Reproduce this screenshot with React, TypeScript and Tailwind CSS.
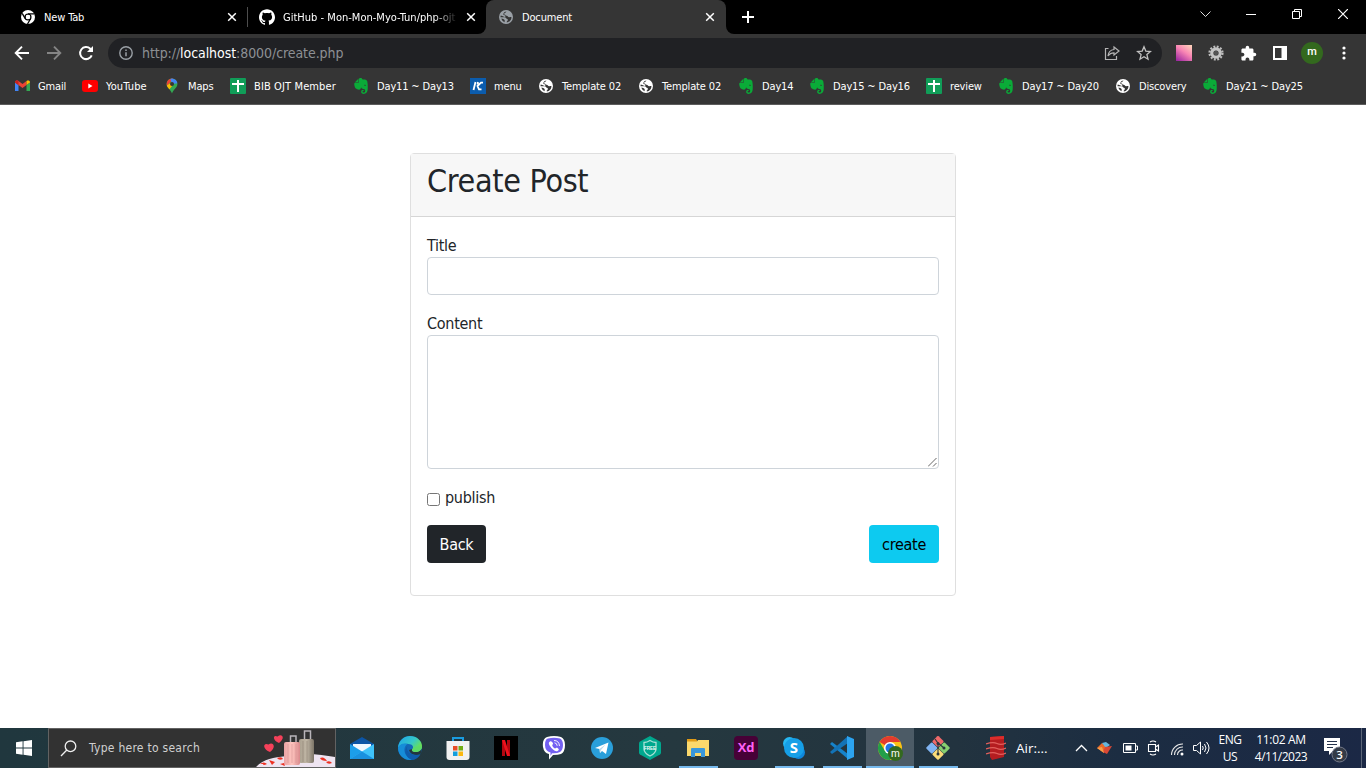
import React from "react";
import { SiEvernote, SiGithub } from "react-icons/si";
import { MdExtension } from "react-icons/md";

const ui = "font-['DejaVu_Sans_Condensed','DejaVu_Sans',sans-serif] [font-stretch:condensed]";

function Globe({ fill, cut }: { fill: string; cut: string }) {
  return (
    <svg width="14" height="14" viewBox="0 0 14 14">
      <circle cx="7" cy="7" r="7" fill={fill} />
      <path d="M8 1.600C6.500 1.900 6.900 2.700 6 3.100 5 3.500 4.600 4.200 5.400 4.500 6.800 4.900 6.300 5.700 7.600 5.700 8.900 5.700 9 7.400 10.200 7.300 11 7.300 11.600 6.900 12.500 7.200 12.400 9.900 10.500 12 7.900 12.500 7.500 11.800 7.900 11.200 8.500 10.700 9.200 10 8.900 8.900 7.900 8.700 7 8.600 6.900 7.500 5.900 7.300 4.500 7.100 3.400 7.500 1.500 7.200 1.500 6.500 1.600 5.900 1.800 5.400 2.700 5.900 3.900 6.100 4.400 6.500 5.500 7.300 6.800 7 6.400 5.800L4.200 4.400C4.600 2.700 5.900 1.500 8 1.600Z" fill={cut} />
      <path d="M2.400 8.500C3.700 9.200 5 8.900 5.600 10 5.900 10.700 5.500 11.400 5.600 12.200 3.900 11.600 2.800 10.300 2.400 8.500Z" fill={cut} />
    </svg>
  );
}

function ChromeMono() {
  return (
    <svg width="14" height="14" viewBox="0 0 14 14">
      <circle cx="7" cy="7" r="7" fill="#fff" />
      <circle cx="7" cy="7" r="2.900" fill="none" stroke="#000" strokeWidth="1.300" />
      <path d="M7 3.900h6.500M4.300 8.600 1.200 3.400M9.700 8.500 6.500 14" stroke="#000" strokeWidth="1.300" />
      <circle cx="7" cy="7" r="2.200" fill="#fff" />
    </svg>
  );
}

function Sheet() {
  return (
    <svg width="16" height="16" viewBox="0 0 16 16">
      <rect width="16" height="16" rx="1" fill="#109d58" />
      <path d="M7 2h2v3h5v2H9v7H7V7H2V5h5Z" fill="#fff" />
    </svg>
  );
}

function Evernote() {
  return <SiEvernote size={16} color="#0aab38" />;
}

function Gmail() {
  return (
    <svg width="15" height="12" viewBox="0 0 15 12">
      <path d="M0 2.500V11h3.500V5Z" fill="#4285f4" />
      <path d="M11.500 5V11H15V2.500Z" fill="#34a853" />
      <path d="M0 2.500C0 .5 2 0 3.500 1L7.500 4l4-3V5L7.500 8 3.500 5Z" fill="#ea4335" />
      <path d="M0 2.500C0 .5 2 0 3.500 1v4Z" fill="#c5221f" />
      <path d="M11.500 1C13 0 15 .5 15 2.500L11.500 5Z" fill="#fbbc04" />
    </svg>
  );
}

function YouTube() {
  return (
    <svg width="16" height="12" viewBox="0 0 16 12">
      <rect width="16" height="12" rx="3" fill="#f00" />
      <path d="m6.300 3.500 4.200 2.500-4.200 2.500Z" fill="#fff" />
    </svg>
  );
}

function MapsPin() {
  return (
    <svg width="16" height="16" viewBox="0 0 16 16">
      <defs>
        <clipPath id="pin"><path d="M8 .5a5.400 5.400 0 0 1 5.400 5.400C13.400 9.500 9.500 11 8 15.500 6.500 11 2.600 9.500 2.600 5.900A5.400 5.400 0 0 1 8 .5Z" /></clipPath>
      </defs>
      <g clipPath="url(#pin)">
        <rect width="16" height="16" fill="#34a853" />
        <path d="M0 0h10L3 8H0Z" fill="#ea4335" />
        <path d="M6 0h10v5L8 6Z" fill="#4285f4" />
        <path d="M2 8 8 4l1 3-5 6-3-3Z" fill="#fbbc04" />
      </g>
      <circle cx="8" cy="5.900" r="2" fill="#353535" />
    </svg>
  );
}

function KMenu() {
  return (
    <svg width="16" height="16" viewBox="0 0 16 16">
      <rect width="16" height="16" fill="#0b5cad" />
      <path d="M5.500 4 3.500 12M13 4.700h-2L7.500 8l1.500 3.300h2.500M8 4 7.500 6.500" fill="none" stroke="#fff" strokeWidth="1.800" />
    </svg>
  );
}

const white = <Globe fill="#fff" cut="#353535" />;

const bookmarks = [
  { w: "w-[68px]", label: "Gmail", icon: <Gmail /> },
  { w: "w-[82px]", label: "YouTube", icon: <YouTube /> },
  { w: "w-[66px]", label: "Maps", icon: <MapsPin /> },
  { w: "w-[123px]", label: "BIB OJT Member", icon: <Sheet /> },
  { w: "w-[117px]", label: "Day11 ~ Day13", icon: <Evernote /> },
  { w: "w-[68px]", label: "menu", icon: <KMenu /> },
  { w: "w-[100px]", label: "Template 02", icon: white },
  { w: "w-[100px]", label: "Template 02", icon: white },
  { w: "w-[71px]", label: "Day14", icon: <Evernote /> },
  { w: "w-[117px]", label: "Day15 ~ Day16", icon: <Evernote /> },
  { w: "w-[72px]", label: "review", icon: <Sheet /> },
  { w: "w-[117px]", label: "Day17 ~ Day20", icon: <Evernote /> },
  { w: "w-[87px]", label: "Discovery", icon: white },
  { w: "w-[120px]", label: "Day21 ~ Day25", icon: <Evernote /> },
];

function CloseX() {
  return (
    <svg className="shrink-0" width="10" height="10" viewBox="0 0 10 10">
      <path d="m1.200 1.200 7.600 7.600M8.800 1.200 1.200 8.800" stroke="#fff" strokeWidth="1.500" />
    </svg>
  );
}

function TabStrip() {
  return (
    <div className={`flex h-[34px] bg-[#353535] text-[11px] tracking-[-0.15px] text-white ${ui}`}>
      <div className="flex w-[486px] items-center rounded-br-lg bg-black">
        <div className="flex w-[247px] items-center pl-[21px]">
          <ChromeMono />
          <span className="ml-[9px] w-[183px] pt-[2px]">New Tab</span>
          <CloseX />
        </div>
        <div className="h-5 w-px bg-[#4d4d4d]" />
        <div className="flex items-center pl-[11px]">
          <SiGithub size={16} color="#fff" />
          <span className="ml-2 w-[175px] whitespace-nowrap pt-[2px] tracking-[0.02px] [mask-image:linear-gradient(to_right,#000_86%,transparent)]">GitHub - Mon-Mon-Myo-Tun/php-ojt</span>
          <span className="ml-2"><CloseX /></span>
        </div>
      </div>
      <div className="w-[240px] bg-black">
        <div className="flex h-full items-center rounded-t-lg bg-[#353535] pl-[13px]">
          <Globe fill="#9aa0a6" cut="#353535" />
          <span className="ml-[9px] w-[183px] pt-[2px]">Document</span>
          <CloseX />
        </div>
      </div>
      <div className="flex flex-1 items-center justify-between rounded-bl-lg bg-black pl-4">
        <svg width="12" height="12" viewBox="0 0 12 12"><path d="M6 0v12M0 6h12" stroke="#fff" strokeWidth="2" /></svg>
        <div className="mb-[6px] flex">
          <div className="flex w-[46px] justify-center"><svg width="11" height="10" viewBox="0 0 11 10"><path d="m.5 2.500 5 5 5-5" fill="none" stroke="#ddd" /></svg></div>
          <div className="flex w-[46px] justify-center"><svg width="10" height="10" viewBox="0 0 10 10"><path d="M0 5.500h10" stroke="#fff" /></svg></div>
          <div className="flex w-[46px] justify-center"><svg width="10" height="10" viewBox="0 0 10 10"><path d="M.5 2.500h7v7h-7ZM2.500 2.500v-2h7v7h-2" fill="none" stroke="#fff" /></svg></div>
          <div className="flex w-[46px] justify-center"><svg width="10" height="10" viewBox="0 0 10 10"><path d="m0 0 10 10M10 0 0 10" stroke="#fff" strokeWidth="1.200" /></svg></div>
        </div>
      </div>
    </div>
  );
}

function Toolbar() {
  const slot = "flex w-8 shrink-0 justify-center";
  return (
    <div className="flex h-[38px] items-center bg-[#353535] pl-[6px]">
      <div className={slot}><svg width="16" height="16" viewBox="0 0 16 16"><path d="M15 8H2M8 1.700 1.700 8 8 14.300" fill="none" stroke="#fff" strokeWidth="1.900" /></svg></div>
      <div className={slot}><svg width="16" height="16" viewBox="0 0 16 16"><path d="M1 8h13M8 1.700 14.300 8 8 14.300" fill="none" stroke="#858585" strokeWidth="1.900" /></svg></div>
      <div className={slot}><svg width="16" height="16" viewBox="0 0 16 16"><path d="M13.700 10.300A6 6 0 1 1 12.300 3.800L14 5.500" fill="none" stroke="#fff" strokeWidth="2" /><path d="M15 1v6H9Z" fill="#fff" /></svg></div>
      <div className="ml-[6px] flex h-[30px] w-[1054px] items-center rounded-full bg-[#202124] pl-[11px]">
        <svg width="14" height="14" viewBox="0 0 14 14"><circle cx="7" cy="7" r="6.200" fill="none" stroke="#9aa0a6" strokeWidth="1.400" /><path d="M7 6.200v4M7 3.500V5" stroke="#9aa0a6" strokeWidth="1.500" /></svg>
        <span className={`ml-[9px] flex-1 text-[14px] tracking-[-0.07px] text-[#8d9094] ${ui}`}>http://<span className="text-white">localhost</span>:8000/create.php</span>
        <div className={slot}><svg width="16" height="16" viewBox="0 0 16 16"><path d="M4.500 3.500H1.500v11h11V11M10 2l5 4-5 4V7.800C7 7.800 5.300 9 4 11c.3-3.500 2-6 6-6.500Z" fill="none" stroke="#b4b4b4" strokeWidth="1.200" /></svg></div>
        <div className="mr-[2px] flex w-8 justify-center"><svg width="16" height="16" viewBox="0 0 16 16"><path d="m8 1.800 1.800 4.300 4.700.4-3.600 3.100 1.100 4.600L8 11.700l-4 2.500 1.100-4.600-3.600-3.100 4.700-.4Z" fill="none" stroke="#c0c0c0" strokeWidth="1.300" /></svg></div>
      </div>
      <div className="ml-[6px] flex items-center">
        <div className={slot}><div className="h-4 w-4 bg-[linear-gradient(35deg,#96209f,#f985b4_55%,#ffdabb)]" /></div>
        <div className={slot}>
          <svg width="16" height="16" viewBox="0 0 16 16"><circle cx="8" cy="8" r="6.500" fill="none" stroke="#bdbdbd" strokeWidth="2.200" strokeDasharray="1.900 1.500" /><circle cx="8" cy="8" r="4.200" fill="none" stroke="#c4c4c4" strokeWidth="3.200" /><circle cx="8" cy="8" r="2.200" fill="#555" /></svg>
        </div>
        <div className={slot}><MdExtension size={17} color="#fff" /></div>
        <div className={slot}><svg width="14" height="14" viewBox="0 0 14 14"><path fillRule="evenodd" d="M0 0h14v14H0ZM2 2v10h6.500V2Z" fill="#fff" /></svg></div>
        <div className={slot}><div className="flex h-[22px] w-[22px] items-center justify-center rounded-full bg-[#33691e] pb-px font-['Roboto',sans-serif] text-[11px] font-medium text-white">m</div></div>
        <div className="flex w-8 justify-center"><svg width="4" height="14" viewBox="0 0 4 14"><circle cx="2" cy="2" r="1.600" fill="#fff" /><circle cx="2" cy="7" r="1.600" fill="#fff" /><circle cx="2" cy="12" r="1.600" fill="#fff" /></svg></div>
      </div>
    </div>
  );
}

function Bookmarks() {
  return (
    <div className={`flex h-[33px] border-b border-[#5c5c5c] bg-[#353535] pb-1 pl-[14px] text-[11px] tracking-[-0.15px] text-white ${ui}`}>
      {bookmarks.map((b, i) => (
        <div key={i} className={`flex shrink-0 items-center whitespace-nowrap ${b.w}`}>
          <div className="flex w-4 shrink-0 justify-center">{b.icon}</div>
          <span className={b.label.startsWith("BIB") || b.label === "YouTube" ? "ml-2 pt-[2px] tracking-[0.12px]" : "ml-2 pt-[2px]"}>{b.label}</span>
        </div>
      ))}
    </div>
  );
}

function CreatePost() {
  return (
    <main className={`flex flex-1 flex-col items-center bg-white pt-12 text-[16px] leading-6 tracking-[-0.28px] text-[#212529] ${ui}`}>
      <section className="h-[443px] w-[546px] rounded border border-[#dfdfdf]">
        <header className="h-[63px] border-b border-[#d6d6d6] bg-[#f7f7f7] px-4 pt-2">
          <h1 className="text-[32px] leading-[38px] tracking-[-0.32px]">Create Post</h1>
        </header>
        <form className="flex flex-col px-4 pt-4">
          <label htmlFor="title" className="h-6 leading-[26px]">Title</label>
          <input id="title" className="h-[38px] rounded border border-[#ced4da]" />
          <label htmlFor="content" className="mt-4 h-6 leading-[26px]">Content</label>
          <div className="flex h-[134px] items-end justify-end rounded border border-[#ced4da] p-px">
            <svg width="9" height="9" viewBox="0 0 9 9"><path d="M0 8.500 8.500 0M5 8.500 8.500 5" stroke="#555" strokeWidth=".9" /></svg>
          </div>
          <div className="mt-4 flex h-6 items-center">
            <div className="mt-1 h-[13px] w-[13px] rounded-[2.500px] border border-[#767676]" />
            <span className="ml-[5px] pt-[2px]">publish</span>
          </div>
          <div className="mt-4 flex justify-between">
            <button type="button" className="h-[38px] w-[59px] rounded bg-[#212529] pt-[2px] text-white">Back</button>
            <button type="button" className="h-[38px] w-[70px] rounded bg-[#0dcaf0] pt-[2px] text-black">create</button>
          </div>
        </form>
      </section>
    </main>
  );
}

function SearchArt() {
  return (
    <svg width="80" height="38" viewBox="0 0 80 38">
      <defs>
        <linearGradient id="pk"><stop stopColor="#eaa2a3" /><stop offset=".5" stopColor="#ffc6c0" /><stop offset="1" stopColor="#d98a8c" /></linearGradient>
        <linearGradient id="gr"><stop stopColor="#aaa08f" /><stop offset=".5" stopColor="#c0b6a5" /><stop offset="1" stopColor="#7d7568" /></linearGradient>
      </defs>
      <path d="M1 38C9 29 22 28 34 27 50 23 67 26 80 28v10Z" fill="#eee4f1" />
      <path d="M49.500 10V2h6v8M35.500 14V7h5.500v7" fill="none" stroke="#b9b5ba" strokeWidth="1.500" />
      <rect x="44" y="10" width="15" height="24" rx="2" fill="url(#gr)" />
      <rect x="29" y="13" width="16" height="23" rx="2" fill="url(#pk)" />
      <path d="M33 15v19M37 15v19M41 15v19" stroke="#d99697" strokeWidth=".7" />
      <path d="M48 12v21M52 12v21" stroke="#928878" strokeWidth=".7" />
      <path d="M15 23C7 20 8 13 13.500 15.500 18 12 22 18 15 23ZM24 14C17 11 18 5 22.500 7.500 27 4 31 9 24 14Z" fill="#f5415a" />
      <path d="M5 35q4-3 7 0-4 2-4 0ZM14 31l6 2-3 3ZM22 29q5-2 6 1-4 2-6-1ZM65 29q4-2 7 3-6 0-7-3ZM71 33q4-2 6 1-4 2-6-1ZM25 35l4-1 1 3Z" fill="#ed3022" />
    </svg>
  );
}

const tasks = [
  { open: false, icon: (
    <svg width="24" height="24" viewBox="0 0 24 24"><path d="M0 8 12 1l12 7v5H0Z" fill="#0c55a6" /><path d="M3 8h18v8H3Z" fill="#eef7ff" /><path d="M0 8l24 15H0Z" fill="#1c9eea" /><path d="M24 8 0 23h24Z" fill="#3fc3fa" /><path d="M0 23 12 15.500 24 23Z" fill="#1a91df" /></svg>) },
  { open: false, icon: (
    <svg width="24" height="24" viewBox="0 0 24 24"><defs><linearGradient id="eg" x1="0" x2="1" y2=".6"><stop stopColor="#1ea4e9" /><stop offset=".6" stopColor="#35c7c9" /><stop offset="1" stopColor="#6ee34a" /></linearGradient></defs><circle cx="12" cy="12" r="12" fill="#1268b8" /><path d="M0 12C.5 4.500 6 0 12 0c7 0 12 5 12 10 0 4-3 6-6 6-3.500 0-5-1.500-3.500-3 1.500-2 0-5-4-5C6 7 2 8.500 0 12Z" fill="url(#eg)" /><path d="M0 12C1 8 6 6.500 9.500 8 6 10 5.500 15 8 19q2 3.500 6 4.800C6 25 0 19 0 12Z" fill="#168dd8" /><path d="M14.500 13c-1.500 1.500 0 3 3.500 3 2.500 0 5-1.500 5.500-3v4l-2 1.500C17 20 12 18 11 14Z" fill="#23373e" /><path d="M14.500 13c-1.500 1.500 0 3 3.500 3 2.500 0 5-1.500 5.700-4l.3-2-8 1Z" fill="#5cda68" /><path d="M9.500 10c-2 4.500 2 9 10 9 2 0 2.500-.5 2.500-.2C19.500 23 16 24 14 23.800 8 22 5 14 9.500 10Z" fill="#0f5cab" /></svg>) },
  { open: false, icon: (
    <svg width="24" height="24" viewBox="0 0 24 24"><path d="M7 6V2h10v4" fill="none" stroke="#1a9ce0" strokeWidth="2" /><path d="M.5 5h23v16q0 3-3 3h-17q-3 0-3-3Z" fill="#f1f1f1" /><path d="M7 10h4.500v4.500H7Z" fill="#e74c25" /><path d="M12.500 10H17v4.500h-4.500Z" fill="#70ad15" /><path d="M7 15.500h4.500V20H7Z" fill="#139edc" /><path d="M12.500 15.500H17V20h-4.500Z" fill="#fbb810" /></svg>) },
  { open: false, icon: (
    <svg width="24" height="24" viewBox="0 0 24 24"><path d="M0 0h24v24H0Z" fill="#000" /><path d="M8 4h3v16H8ZM13 4h3v16h-3Z" fill="#b20710" /><path d="M8 4h3l5 16h-3Z" fill="#ed111d" /></svg>) },
  { open: false, icon: (
    <svg width="24" height="24" viewBox="0 0 24 24"><path d="M5 1q7-2 14 0 4 2 4 8 0 7-4 9-3 1-8 1l-4 4.500V18q-5-1-6-7Q0 3 5 1Z" fill="#fff" /><path d="M6 2.500q6-1.500 12 0 3 1.500 3 6.500t-3 7q-3 1.500-8 1.200L8.500 20v-3.500Q3 15 3 9t3-6.500Z" fill="#7360f2" /><path d="M8 5.500c-2 1-1 3 0 4.500 2 3 5 6 7.500 5 2-1 1.500-2 0-3-1.500-.8-1.500 1-3 .3-1.500-1-2.500-2.500-2.200-3.300.3-.8 1.200-.8.500-2-.7-1-1.500-2-2.800-1.500Z" fill="#fff" /><path d="M12 4.500q5 0 5.500 5.500M12.500 6.800q2.500.3 2.700 3" stroke="#fff" fill="none" strokeWidth=".9" /></svg>) },
  { open: false, icon: (
    <svg width="22" height="22" viewBox="0 0 22 22"><circle cx="11" cy="11" r="11" fill="#2a9fda" /><path d="M4 11 17.500 5.500 15 17l-4-3-2 2-.5-4Z" fill="#fff" /><path d="m8.500 12 6-4.500L10 13l-1 3Z" fill="#b9d9eb" /></svg>) },
  { open: false, icon: (
    <svg width="22" height="24" viewBox="0 0 22 24"><path d="M11 0 21 5.500q1 .6 1 2v9q0 1.400-1 2L11 24 1 18.500q-1-.6-1-2v-9q0-1.400 1-2Z" fill="#00a88e" /><path d="M11 4.500q3 2 6 2V13q0 4-6 7-6-3-6-7V6.500q3 0 6-2Z" fill="none" stroke="#a9e0d6" strokeWidth="1.300" /><text x="11" y="13.500" textAnchor="middle" fontSize="4.500" fontWeight="bold" fontFamily="Liberation Sans" fill="#fff">FREE</text></svg>) },
  { open: true, icon: (
    <svg width="22" height="20" viewBox="0 0 22 20"><path d="M0 1h9l2 3H0Z" fill="#e19b16" /><path d="M0 3.500h10l1-1.500h11v16H0Z" fill="#fbd86c" /><path d="M4 19v-8q0-1 1-1h12q1 0 1 1v8h-4v-4H8v4Z" fill="#3997db" /></svg>) },
  { open: false, icon: (
    <div className="flex h-6 w-6 items-center justify-center rounded-[4px] bg-[#470137] font-['Open_Sans',sans-serif] text-[13px] font-bold tracking-[-0.3px] text-[#ff61f6]">Xd</div>) },
  { open: true, icon: (
    <svg width="22" height="22" viewBox="0 0 22 22"><circle cx="6.500" cy="6.500" r="6.500" fill="#27b8f3" /><circle cx="15.500" cy="15.500" r="6.500" fill="#0e87dc" /><circle cx="11" cy="11" r="10" fill="#169fe7" /><text x="11" y="16.300" textAnchor="middle" fontSize="15" fontWeight="bold" fontFamily="Open Sans" fill="#fff">S</text></svg>) },
  { open: true, icon: (
    <svg width="24" height="24" viewBox="0 0 24 24"><path d="m0 8 2-2 16 12v5Z" fill="#1683cb" /><path d="M0 16 18 0v7L2 18Z" fill="#1373b7" /><path d="m17 0 7 3v18l-7 3Z" fill="#2ca4f0" /></svg>) },
  { open: true, icon: (
    <svg width="26" height="26" viewBox="0 0 26 26"><circle cx="13" cy="13" r="12" fill="#fbc116" /><path d="M13 13 2.600 7A12 12 0 0 1 23.400 7H13Z" fill="#e33b2e" /><path d="M2.600 7A12 12 0 0 0 13 25l5-9H8Z" fill="#229f49" /><circle cx="13" cy="13" r="6" fill="#fff" /><circle cx="13" cy="13" r="4.500" fill="#2274e5" /><circle cx="18.500" cy="18.500" r="7.500" fill="#33691e" /><text x="18.500" y="21.500" textAnchor="middle" fontSize="10" fontFamily="Roboto" fill="#fff">m</text></svg>) },
  { open: true, icon: (
    <svg width="24" height="24" viewBox="0 0 24 24"><rect x="7.800" y="1.300" width="8.400" height="8.400" rx="1" transform="rotate(45 12 5.500)" fill="#f0696a" /><rect x="1.600" y="7.800" width="8.400" height="8.400" rx="1" transform="rotate(45 5.800 12)" fill="#80b4f2" /><rect x="14" y="7.800" width="8.400" height="8.400" rx="1" transform="rotate(45 18.200 12)" fill="#88cf70" /><rect x="7.800" y="14" width="8.400" height="8.400" rx="1" transform="rotate(45 12 18.200)" fill="#fbdc78" /><path d="m9 3 3 4 6 5M12 7v11" fill="none" stroke="#29363c" strokeWidth="1.100" /><circle cx="12" cy="7.500" r="1.500" fill="#29363c" /><circle cx="18" cy="12" r="1.500" fill="#29363c" /><circle cx="12" cy="18" r="1.500" fill="#29363c" /></svg>) },
];

function Taskbar() {
  const seg = "font-['Open_Sans',sans-serif] text-white text-[12px]";
  return (
    <footer className="flex h-10 items-stretch bg-[linear-gradient(90deg,#20373e,#25383f_50%,#22333f_70%,#1c2d42_82%,#1b2845)]">
      <div className="flex w-12 items-center justify-center">
        <svg width="16" height="16" viewBox="0 0 16 16"><path d="m0 2.200 6.600-.9v6.200H0ZM7.500 1.200 16 0v7.500H7.500ZM0 8.400h6.600v6.300L0 13.800ZM7.500 8.400H16V16l-8.500-1.200Z" fill="#fff" /></svg>
      </div>
      <div className="flex h-10 w-72 items-center border border-[#626262] bg-[#323232] pl-[11px]">
        <svg width="17" height="17" viewBox="0 0 17 17"><circle cx="10.500" cy="6.300" r="5.300" fill="none" stroke="#eee" strokeWidth="1.300" /><path d="M6.800 10 1 16" stroke="#eee" strokeWidth="1.300" /></svg>
        <span className={`ml-3 flex-1 whitespace-nowrap text-[12px] tracking-[0.27px] text-[#d0d0d0] ${ui}`}>Type here to search</span>
        <SearchArt />
      </div>
      <div className="ml-[2px] flex">
        {tasks.map((t, i) => (
          <div key={i} className={i === 11 ? "flex w-12 flex-col items-center bg-[#4c5b66]" : "flex w-12 flex-col items-center"}>
            <div className="flex h-[38px] items-center pt-[2px]">{t.icon}</div>
            <div className={t.open ? (i === 11 ? "h-[2px] w-full bg-[#76b9ed]" : "h-[2px] w-[39px] bg-[#76b9ed]") : "h-[2px]"} />
          </div>
        ))}
      </div>
      <div className="ml-6 flex items-center">
        <svg width="20" height="24" viewBox="0 0 20 24"><path d="m4 1 14-1v21L6 24l-2-3Z" fill="#b51d20" /><path d="M0 8q7-2.500 11-.5t9-.5M0 13q7-2.500 11-.5t9-.5M0 18q7-2.500 11-.5t9-.5" fill="none" stroke="#e2605c" strokeWidth="1.300" /><path d="m4 1 14-1v3L4 4Z" fill="#dd2d2b" /></svg>
        <span className="ml-[10px] w-[55px] font-['Open_Sans',sans-serif] text-[13.500px] text-white">Air:...</span>
        <div className="flex w-5 justify-center"><svg width="13" height="8" viewBox="0 0 13 8"><path d="m1 7 5.500-5.500L12 7" fill="none" stroke="#fff" strokeWidth="1.300" /></svg></div>
        <div className="flex w-7 justify-center"><svg width="16" height="12" viewBox="0 0 16 12"><path d="m0 6 5-5 4 3-2 7Z" fill="#eb6a27" /><path d="M5 1 9 0l4 3-4 3Z" fill="#67b6db" /><path d="m8 5 7-1-5 8-4-2Z" fill="#d94835" /><path d="m0 6 5-1 2 6Z" fill="#f6a04a" /></svg></div>
        <div className="flex w-[22px] justify-center"><svg width="15" height="10" viewBox="0 0 15 10"><path d="M.5.5h12v9H.5ZM13 3h1.500v4H13" fill="none" stroke="#fff" /><path d="M2.500 2.500h6v5h-6Z" fill="#fff" /></svg></div>
        <div className="flex w-6 justify-center"><svg width="13" height="16" viewBox="0 0 13 16"><path d="M1.500 4.500h7v7h-7ZM8.500 7l3-2v6l-3-2M3 2q3-2 6 0M3 14q3 2 6 0" fill="none" stroke="#fff" strokeWidth="1.100" /></svg></div>
        <div className="flex w-6 justify-center pt-[2px]"><svg width="14" height="14" viewBox="0 0 14 14"><path d="M1.500 13A11 11 0 0 1 13 2M4.500 13A8 8 0 0 1 13 5M7.500 13A5 5 0 0 1 13 8" fill="none" stroke="#e6e6e6" strokeWidth="1.100" /><circle cx="12" cy="12" r="1.500" fill="#fff" /></svg></div>
        <div className="flex w-6 justify-center"><svg width="17" height="14" viewBox="0 0 17 14"><path d="M.5 4.500h3l4-3.500v12l-4-3.500h-3ZM9.500 5q1.500 2 0 4M11.500 3q3 4 0 8M13.500 1q5 6 0 12" fill="none" stroke="#fff" /></svg></div>
        <div className={`ml-[3px] w-7 text-center leading-[17px] tracking-[-0.5px] ${seg}`}>ENG<br />US</div>
        <div className={`ml-[7px] w-[60px] whitespace-nowrap text-center leading-[17px] tracking-[-0.5px] ${seg}`}><span className="tracking-[-0.35px]">11:02 AM</span><br />4/11/2023</div>
        <div className="ml-[13px] pt-1">
          <svg width="25" height="26" viewBox="0 0 25 26"><path d="M0 1h16v13H9l-4 4v-4H0Z" fill="#fff" /><path d="M3 4.500h10M3 7.500h10M3 10.500h6" stroke="#26334c" /><circle cx="15.500" cy="17.500" r="7.500" fill="#343b47" stroke="#74798a" /><text x="15.500" y="21.500" textAnchor="middle" fontSize="11.500" fontWeight="600" fontFamily="Open Sans" fill="#fff">3</text></svg>
        </div>
      </div>
      <div className="ml-auto mr-1 w-px bg-[#5b6577]" />
    </footer>
  );
}

export default function App() {
  return (
    <div className="flex h-[768px] w-[1366px] flex-col overflow-hidden bg-white">
      <TabStrip />
      <Toolbar />
      <Bookmarks />
      <CreatePost />
      <Taskbar />
    </div>
  );
}
